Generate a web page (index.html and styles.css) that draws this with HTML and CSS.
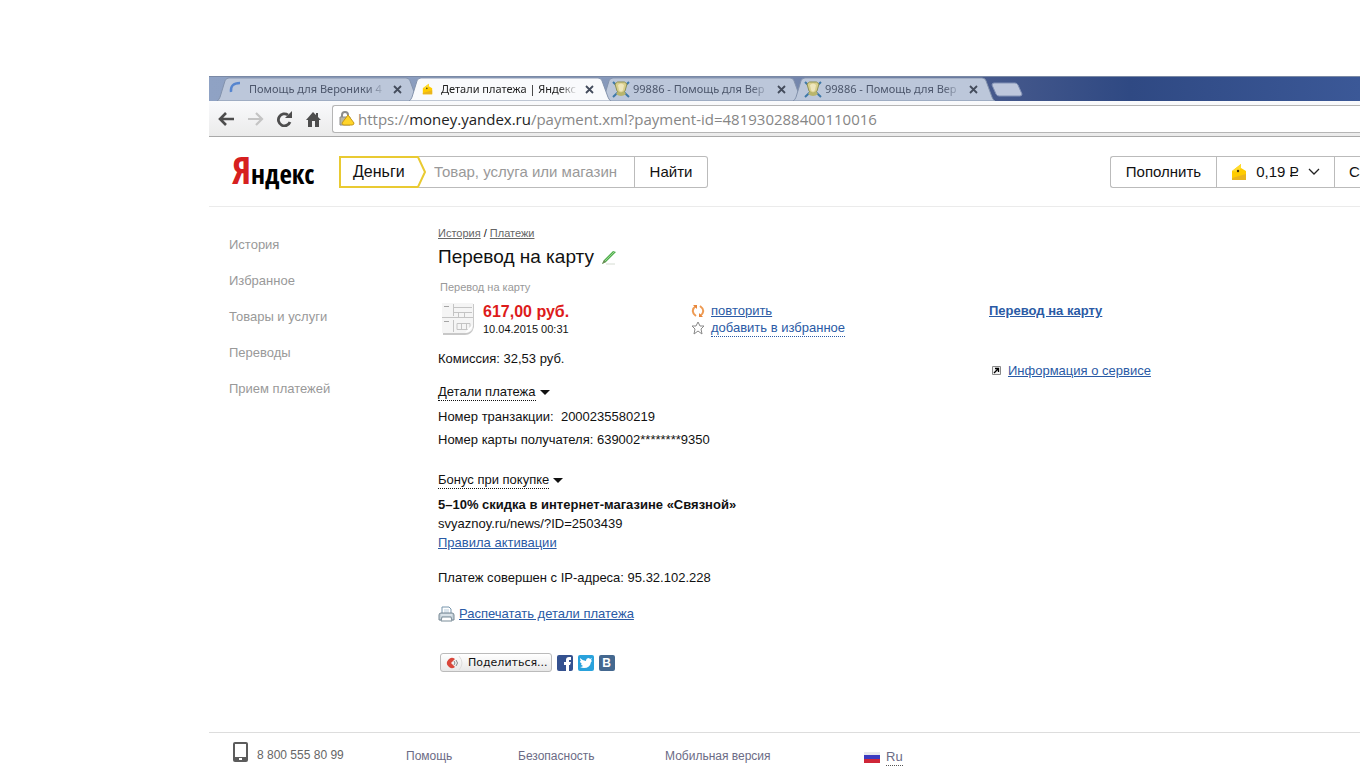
FILE: index.html
```html
<!DOCTYPE html>
<html lang="ru">
<head>
<meta charset="utf-8">
<title>Детали платежа | Яндекс.Деньги</title>
<link rel="stylesheet" href="styles.css">
</head>
<body>
<svg class="defs" width="0" height="0" aria-hidden="true">
  <symbol id="crest" viewBox="0 0 18 18">
    <path d="M1 2L17 17M17 2L1 17" stroke="#3e78a8" stroke-width="2"/>
    <path d="M3 4Q5 1 9 2Q13 1 15 4L13 11Q9 16 5 11Z" fill="#d9cf8d" stroke="#8d9155"/>
    <path d="M6 5Q9 2 12 5L11 10Q9 13 7 10Z" fill="#eee6bd"/>
    <path d="M4 14Q9 18 14 14L12 11Q9 14 6 11Z" fill="#b9b56c"/>
  </symbol>
  <symbol id="purse" viewBox="0 0 16 18">
    <path d="M1 8L10 1V5L15 8V17H1Z" fill="#fc0"/>
    <path d="M1 15L15 11V17H1Z" fill="#eab41c"/>
    <path d="M1 8L10 1V5L7 9Z" fill="#ffdb2e"/>
    <circle cx="7" cy="8" r="1.2" fill="#43340a"/>
  </symbol>
  <symbol id="tabshape" viewBox="0 0 202 25" preserveAspectRatio="none">
    <path d="M0 25Q2 24 3 21L8 4Q9 1 12 1H189Q192 1 193 4L199 21Q200 24 202 25Z" fill="currentColor" stroke="#8291ab" stroke-width="1"/>
  </symbol>
  <symbol id="cross" viewBox="0 0 9 9">
    <path d="M1 1L8 8M8 1L1 8" stroke="currentColor" stroke-width="1.8"/>
  </symbol>
</svg>
<div class="window">
  <div class="tabs">
    <div class="tab">
      <svg class="tab-bg"><use href="#tabshape"/></svg>
      <svg class="favicon" viewBox="0 0 18 18"><path d="M3 12Q2 3 12 3" fill="none" stroke="#5685cf" stroke-width="2.4"/></svg>
      <span class="tab-title">Помощь для Вероники 4</span>
      <button class="close" aria-label="Закрыть вкладку"><svg><use href="#cross"/></svg></button>
    </div>
    <div class="tab active">
      <svg class="tab-bg"><use href="#tabshape"/></svg>
      <svg class="favicon" viewBox="0 0 18 18"><use href="#purse" x="2" y="3" width="11" height="12"/></svg>
      <span class="tab-title">Детали платежа | Яндекс</span>
      <button class="close" aria-label="Закрыть вкладку"><svg><use href="#cross"/></svg></button>
    </div>
    <div class="tab">
      <svg class="tab-bg"><use href="#tabshape"/></svg>
      <svg class="favicon"><use href="#crest"/></svg>
      <span class="tab-title">99886 - Помощь для Вер</span>
      <button class="close" aria-label="Закрыть вкладку"><svg><use href="#cross"/></svg></button>
    </div>
    <div class="tab">
      <svg class="tab-bg"><use href="#tabshape"/></svg>
      <svg class="favicon"><use href="#crest"/></svg>
      <span class="tab-title">99886 - Помощь для Вер</span>
      <button class="close" aria-label="Закрыть вкладку"><svg><use href="#cross"/></svg></button>
    </div>
    <button class="newtab" aria-label="Новая вкладка"><svg width="32" height="15" viewBox="0 0 32 15"><path d="M3 1H24Q26 1 27 3L31 12Q31 14 29 14H8Q6 14 5 12L1 3Q1 1 3 1Z" fill="#bec7dc" stroke="#8291b5"/></svg></button>
  </div>

  <div class="toolbar">
    <button class="tool" aria-label="Назад"><svg width="17" height="14" viewBox="0 0 17 14"><path d="M8 1L2 7L8 13M2 7H16" fill="none" stroke="#4d4d4d" stroke-width="2.6"/></svg></button>
    <button class="tool" aria-label="Вперёд"><svg width="17" height="14" viewBox="0 0 17 14"><path d="M9 1L15 7L9 13M1 7H15" fill="none" stroke="#c4c4c4" stroke-width="2.2"/></svg></button>
    <button class="tool" aria-label="Обновить"><svg width="17" height="16" viewBox="0 0 17 16"><path d="M14 11A6 6 0 1 1 12 4" fill="none" stroke="#4d4d4d" stroke-width="2.8"/><path d="M16 0V7H9Z" fill="#4d4d4d"/></svg></button>
    <button class="tool" aria-label="Домой"><svg width="17" height="16" viewBox="0 0 17 16"><path d="M8 1L11 4V2H13V6L16 9H14V16H10V10H7V16H3V9H1Z" fill="#4d4d4d"/></svg></button>
    <div class="omnibox">
      <svg width="18" height="18" viewBox="0 0 18 18"><path d="M4 8V5Q4 2 7 2Q10 2 10 5V8" fill="none" stroke="#8c8c8c" stroke-width="2"/><path d="M2 7H12V15H2Z" fill="#b9b6a4" stroke="#8c8c8c"/><path d="M10 5L16 13Q16 15 14 15H6Q4 15 4 13Z" fill="#ffd42a" stroke="#c79a14" stroke-linejoin="round"/></svg>
      <span class="url">https://<b>money.yandex.ru</b>/payment.xml?payment-id=481930288400110016</span>
    </div>
  </div>

  <header class="header">
    <a class="logo" href="#"><span>Я</span>ндекс</a>
    <form class="search">
      <a class="service" href="#">
        <svg class="service-frame" viewBox="0 0 87 32"><path d="M1 1H79L86 16L79 31H1Z" fill="#fff" stroke="#e9ca32" stroke-width="2"/></svg>
        <span>Деньги</span>
      </a>
      <input class="query" type="text" aria-label="Поиск" placeholder="Товар, услуга или магазин">
      <button class="find" type="button">Найти</button>
    </form>
    <div class="account">
      <button class="acc">Пополнить</button>
      <button class="acc balance"><svg width="16" height="18"><use href="#purse"/></svg><span>0,19 <span class="rub">Р</span></span><svg width="12" height="8" viewBox="0 0 12 8"><path d="M1 1L6 6L11 1" fill="none" stroke="#222" stroke-width="1.3"/></svg></button>
      <button class="acc user">С</button>
    </div>
  </header>

  <div class="content">
    <nav class="side">
      <a href="#">История</a>
      <a href="#">Избранное</a>
      <a href="#">Товары и услуги</a>
      <a href="#">Переводы</a>
      <a href="#">Прием платежей</a>
    </nav>
    <main class="main">
      <div class="crumbs"><a href="#">История</a> / <a href="#">Платежи</a></div>
      <h1>Перевод на карту
        <svg width="16" height="16" viewBox="0 0 16 16"><path d="M5 15H14" stroke="#d5dcd2"/><path d="M3 11L12 2L15 3L5 13L1 15Z" fill="#4fae4d"/><path d="M4 12L13 3" stroke="#97d48d"/><path d="M1 15L3 11L5 13Z" fill="#6f8a5a"/></svg>
      </h1>
      <div class="kind">Перевод на карту</div>
      <div class="payment">
        <div class="sum">
          <svg width="35" height="34" viewBox="0 0 35 34"><path d="M2 2H33V25Q31 33 24 33H2Z" fill="#c8c8c8"/><path d="M1 1H32V23Q32 31 24 31H1Z" fill="#f5f5f5"/><g fill="none" stroke="#c4c4c4"><path d="M1 15.500H32M12.500 2V14M12 5.500H31M12 10.500H31M17.500 11V15M23.500 11V15M16 21.500H29V27.500H16ZM20.500 21V28M25.500 21V28M12.500 18V30"/><path d="M3 4.500H8M3 19.500H8" stroke="#a5a5a5"/></g><path d="M32 23Q30 30 24 31Q28 25 32 23Z" fill="#fff"/></svg>
          <div>
            <strong>617,00 руб.</strong>
            <time>10.04.2015 00:31</time>
          </div>
        </div>
        <div class="actions">
          <div><svg width="14" height="14" viewBox="0 0 14 14"><path d="M5 12Q1 9 2 6Q2 4 5 2M9 2Q13 5 12 8Q12 10 9 12" fill="none" stroke="#ee9a52" stroke-width="2"/><path d="M2 1H6V5ZM12 13H8V9Z" fill="#e7863a"/></svg><a href="#">повторить</a></div>
          <div><svg width="14" height="14" viewBox="0 0 14 14"><path d="M7 1L9 5L13 5L10 8L11 13L7 10L3 13L4 8L1 5L5 5Z" fill="#fff" stroke="#888"/></svg><a class="dotted" href="#">добавить в избранное</a></div>
        </div>
        <div class="about">
          <a class="bold" href="#">Перевод на карту</a>
          <div><svg width="9" height="9" viewBox="0 0 9 9"><path d="M0.500 0.500H8.500V8.500H0.500Z" fill="#f2f2f2" stroke="#888"/><path d="M2 7L6 3M3 2.500H6.500V6" fill="none" stroke="#000" stroke-width="1.3"/></svg><a href="#">Информация о сервисе</a></div>
        </div>
      </div>
      <p class="fee">Комиссия: 32,53 руб.</p>
      <button class="toggle"><span>Детали платежа</span><i></i></button>
      <p class="detail">Номер транзакции: &nbsp;2000235580219</p>
      <p class="detail">Номер карты получателя: 639002********9350</p>
      <button class="toggle bonus"><span>Бонус при покупке</span><i></i></button>
      <div class="offer">
        <b>5–10% скидка в интернет-магазине «Связной»</b>
        <span>svyaznoy.ru/news/?ID=2503439</span>
        <a href="#">Правила активации</a>
      </div>
      <p class="ip">Платеж совершен с IP-адреса: 95.32.102.228</p>
      <div class="print">
        <svg width="17" height="16" viewBox="0 0 17 16"><path d="M4 8V1H11L13 3V8" fill="#fff" stroke="#7795ac"/><path d="M6 4H11M6 6H11" stroke="#b8cddd"/><path d="M1 9Q1 7 3 7H14Q16 7 16 9V14H1Z" fill="#c5d1d9" stroke="#788995"/><path d="M4 11H13L14 15H3Z" fill="#fff" stroke="#7b8d99"/><path d="M3 9H14" stroke="#eef4f8"/></svg>
        <a href="#">Распечатать детали платежа</a>
      </div>
      <div class="share">
        <button class="share-btn"><svg width="19" height="16" viewBox="0 0 19 16"><path d="M10 4A5 5 0 1 0 10 12L6 8Z" fill="#d9473b"/><path d="M9 6Q11 8 9 10M11 5Q14 8 11 11" fill="none" stroke="#888"/><path d="M14 1Q20 8 14 15" fill="none" stroke="#ddd"/></svg>Поделиться...</button>
        <a href="#" aria-label="Facebook"><svg width="16" height="16" viewBox="0 0 16 16"><rect width="16" height="16" rx="2" fill="#34518f"/><path d="M9 16V10H7V7H9V5Q9 2 12 2H14V5H12V7H14L13 10H12V16Z" fill="#fff"/></svg></a>
        <a href="#" aria-label="Twitter"><svg width="16" height="16" viewBox="0 0 16 16"><rect width="16" height="16" rx="2" fill="#29a2dc"/><path d="M2 3Q5 6 8 6Q8 3 11 3L12 4L14 3L13 5L14 6L13 7Q12 13 6 13Q4 13 2 12Q4 12 5 11Q3 10 3 9H4Q2 8 2 6L3 6Q2 5 2 3Z" fill="#fff"/></svg></a>
        <a class="vk" href="#" aria-label="ВКонтакте">В</a>
      </div>
    </main>
  </div>

  <footer class="footer">
    <span class="phone"><svg width="15" height="20" viewBox="0 0 15 20"><rect width="15" height="20" rx="2" fill="#5c5c5c"/><path d="M2 2H13V15H2Z" fill="#fff"/><rect x="6" y="16" width="3" height="2" fill="#fff"/></svg>8 800 555 80 99</span>
    <a class="help" href="#">Помощь</a>
    <a class="safety" href="#">Безопасность</a>
    <a class="mobile" href="#">Мобильная версия</a>
    <a class="lang" href="#"><svg width="16" height="11" viewBox="0 0 16 11"><path d="M0 0H16V11H0Z" fill="#e8e8ec"/><path d="M0 3H16V8H0Z" fill="#3b3bc0"/><path d="M0 7H16V11H0Z" fill="#cf2638"/></svg><span>Ru</span></a>
  </footer>
</div>
</body>
</html>
```
FILE: styles.css
```css
* { box-sizing: border-box; }
body {
  margin: 0;
  padding: 76px 0 0 209px;
  background: #fff;
  color: #111;
  font: 13px/19px "Liberation Sans", Arial, sans-serif;
  overflow: hidden;
}
p, h1 { margin: 0; font-weight: normal; }
button { padding: 0; border: 0; background: none; color: inherit; font: inherit; }
a { color: #2a5aa5; }
svg { flex: none; }
.defs { position: absolute; }
.window {
  display: flex;
  flex-direction: column;
  min-height: calc(100vh - 76px);
}

.tabs {
  display: flex;
  height: 25px;
  padding-left: 8px;
  background: linear-gradient(90deg, #8fa2c4, #8496b8 45%, #46598c 68%, #2f4983 80%, #3b5897);
  border-top: 1px solid #7a89a5;
}
.tab {
  position: relative;
  display: flex;
  align-items: center;
  flex: none;
  width: 202px;
  margin-right: -10px;
  padding: 0 17px 0 11px;
  color: #bcc7da;
}
.active { z-index: 1; color: #f9fafc; }
.tab-bg { position: absolute; inset: 0; width: 100%; height: 100%; }
.favicon { position: relative; width: 18px; height: 18px; }
.tab-title {
  position: relative;
  flex: 1;
  min-width: 0;
  margin: 0 4px 0 3px;
  white-space: nowrap;
  color: #4c566b;
  font: 11px/18px "Noto Sans", sans-serif;
  -webkit-mask-image: linear-gradient(90deg, #000 84%, transparent 98%);
  mask-image: linear-gradient(90deg, #000 84%, transparent 98%);
}
.active .tab-title { color: #222; }
.close { position: relative; display: flex; color: #444c5c; }
.close svg { width: 9px; height: 9px; }
.newtab { display: flex; align-items: center; margin-left: 6px; }

.toolbar {
  display: flex;
  align-items: center;
  height: 36px;
  padding-left: 9px;
  background: linear-gradient(#f9fafc, #ebebeb);
  border-bottom: 1px solid #a9a9a9;
}
.tool { display: flex; justify-content: center; width: 17px; margin-right: 12px; }
.omnibox {
  display: flex;
  align-items: center;
  gap: 2px;
  flex: 1;
  height: 28px;
  margin-left: -2px;
  padding-left: 5px;
  background: #fff;
  border: 1px solid #b5b5b5;
  border-right: 0;
  border-radius: 3px 0 0 3px;
}
.url { color: #868686; font: 15px/22px "Open Sans", sans-serif; white-space: nowrap; }
.url b { color: #222; font-weight: normal; }

.header {
  display: flex;
  align-items: center;
  height: 70px;
  padding-left: 23px;
  border-bottom: 1px solid #ebebeb;
  font-size: 15px;
  white-space: nowrap;
}
.logo {
  width: 107px;
  color: #000;
  font: 27px/38px "Open Sans Condensed", "Liberation Sans Narrow", "DejaVu Sans Condensed", sans-serif;
  text-decoration: none;
}
.logo span { color: #d6201f; font-size: 38px; }
.search { display: flex; width: 369px; height: 32px; }
.service {
  position: relative;
  z-index: 1;
  width: 87px;
  margin-right: -7px;
  padding-left: 14px;
  color: #111;
  font-size: 16px;
  line-height: 32px;
  text-decoration: none;
}
.service-frame { position: absolute; left: 0; top: 0; width: 87px; height: 32px; }
.service span { position: relative; }
.query {
  flex: 1;
  min-width: 0;
  padding: 0 0 0 15px;
  border: 1px solid #bbb;
  border-left: 0;
  font: 15px/30px "Liberation Sans", Arial, sans-serif;
}
.query::placeholder { color: #999; }
.find { width: 73px; border: 1px solid #bbb; border-left-width: 0; border-radius: 0 3px 3px 0; }
.account { display: flex; height: 32px; margin-left: auto; }
.acc {
  width: 106px;
  border: 1px solid #bbb;
  border-right: 0;
}
.acc:first-child { border-radius: 3px 0 0 3px; }
.balance { display: flex; align-items: center; justify-content: space-between; width: 118px; padding: 0 14px; }
.rub {
  font-size: 14px;
  background: linear-gradient(#222, #222) 0 11px / 8px 1px no-repeat;
}
.user { width: 26px; padding-left: 14px; text-align: left; }

.content { display: flex; flex: 1; }
.side {
  display: flex;
  flex-direction: column;
  gap: 17px;
  width: 229px;
  padding: 28px 0 0 20px;
}
.side a { color: #999; text-decoration: none; }
.main { flex: 1; padding-top: 18px; }
.crumbs { font-size: 11px; line-height: 16px; }
.crumbs a { color: #666; }
h1 { display: flex; align-items: center; gap: 7px; padding-top: 1px; font-size: 19px; line-height: 30px; }
.kind { padding: 7px 0 0 2px; color: #999; font-size: 11px; line-height: 16px; }
.payment { display: flex; height: 51px; padding-top: 7px; }
.sum { display: flex; gap: 7px; width: 253px; padding-left: 3px; }
.sum strong, .sum time { display: block; }
.sum strong { padding-top: 1px; color: #dd1b1b; font-size: 16px; line-height: 18px; }
.sum time { font-size: 11px; line-height: 16px; }
.actions { width: 298px; line-height: 17px; }
.actions div { display: flex; align-items: center; gap: 6px; }
.dotted { text-decoration: none; border-bottom: 1px dotted #2a5aa5; line-height: 17px; }
.about .bold { display: block; font-weight: bold; line-height: 17px; }
.about div { display: flex; align-items: center; gap: 7px; padding: 42px 0 0 3px; }
.fee { margin-top: 3px; }
.toggle { display: flex; align-items: center; gap: 4px; margin: 16px 0 4px; line-height: 16px; }
.toggle span { border-bottom: 1px dotted #111; }
.toggle i { border: 5px solid transparent; border-top-color: #111; border-bottom: 0; }
.detail { line-height: 23px; }
.bonus { margin: 21px 0 6px; }
.offer b, .offer span, .offer a { display: block; width: fit-content; }
.ip { margin-top: 16px; }
.print { display: flex; align-items: center; gap: 4px; margin-top: 17px; }
.share { display: flex; gap: 5px; margin-top: 30px; padding-left: 2px; }
.share-btn {
  display: flex;
  align-items: center;
  gap: 4px;
  height: 19px;
  padding: 0 3px 0 4px;
  background: linear-gradient(#fff, #e8e8e8);
  border: 1px solid #bbb;
  border-radius: 3px;
  font: 11px/16px "DejaVu Sans", Verdana, sans-serif;
}
.share a { display: flex; align-self: center; }
.share .vk {
  justify-content: center;
  width: 16px;
  border-radius: 2px;
  background: #44688f;
  color: #fff;
  font-size: 12px;
  font-weight: bold;
  line-height: 16px;
  text-decoration: none;
}

.footer {
  display: flex;
  height: 36px;
  padding: 13px 0 0 24px;
  border-top: 1px solid #ddd;
  color: #666;
  font-size: 12px;
  line-height: 20px;
  white-space: nowrap;
}
.footer a { color: #6b6b85; text-decoration: none; }
.phone { display: flex; align-items: center; gap: 9px; width: 173px; height: 18px; }
.phone svg { margin-top: -6px; }
.help { width: 112px; }
.safety { width: 147px; }
.mobile { width: 199px; }
.lang { display: flex; align-items: center; gap: 6px; }
.lang span { border-bottom: 1px dotted #555; line-height: 16px; font-size: 13px; }
```
